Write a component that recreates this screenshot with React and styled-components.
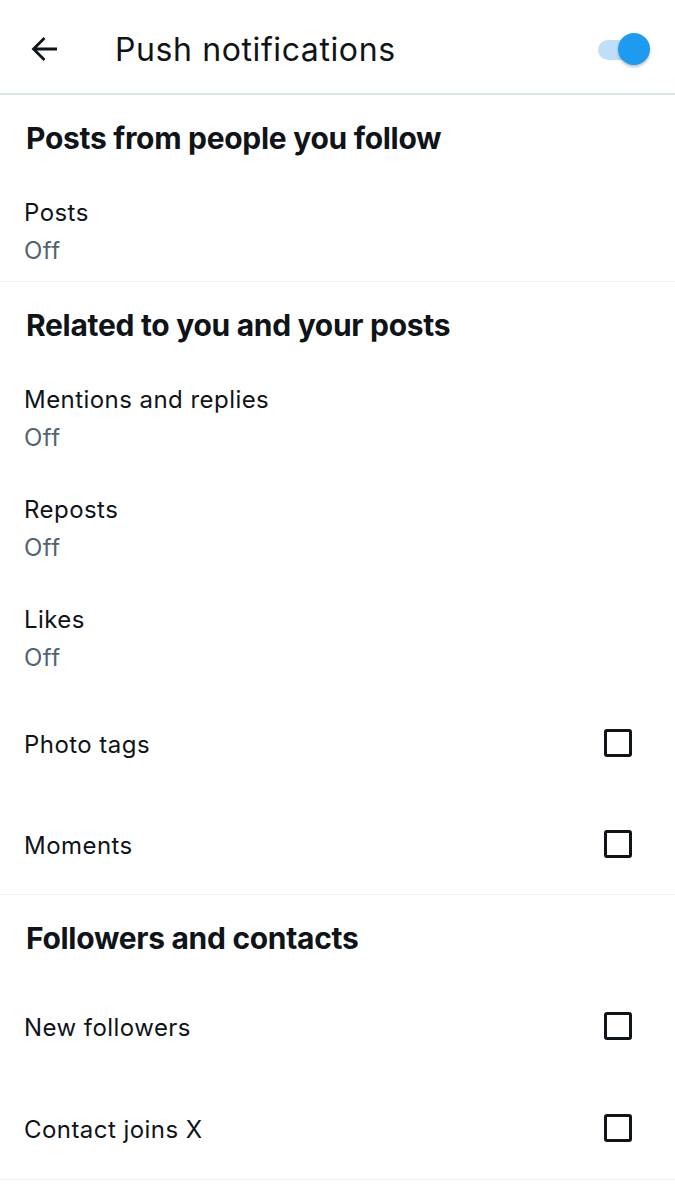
import React from "react";
import styled, { createGlobalStyle } from "styled-components";

const Global = createGlobalStyle`
  html, body { margin: 0; padding: 0; background: #ffffff; }
  body {
    font-family: Inter, "Noto Sans", "Liberation Sans", sans-serif;
    color: #0f1419;
    -webkit-font-smoothing: antialiased;
  }
`;

const Page = styled.div`
  width: 675px;
  min-height: 1200px;
  background: #fff;
`;

const Header = styled.header`
  height: 93px;
  display: flex;
  align-items: center;
  border-bottom: 2px solid #dbe4e8;
  padding: 0 24px 0 30px;
`;

const BackButton = styled.button`
  width: 30px;
  height: 30px;
  padding: 0;
  border: none;
  background: none;
  display: flex;
  align-items: center;
  justify-content: center;
  color: #0f1419;
  margin-top: 4px;
`;

const Title = styled.h1`
  flex: 1;
  margin: 6px 0 0 55px;
  font-size: 32px;
  font-weight: 400;
  letter-spacing: 0.6px;
  line-height: 38px;
`;

const Toggle = styled.div`
  position: relative;
  width: 52px;
  height: 33px;
  margin-right: 1px;
  margin-top: 6px;
`;

const Track = styled.div`
  position: absolute;
  left: 0;
  top: 7px;
  width: 44px;
  height: 20px;
  border-radius: 10px;
  background: #bfdff8;
`;

const Thumb = styled.div`
  position: absolute;
  right: 0;
  top: 0;
  width: 32px;
  height: 32px;
  border-radius: 50%;
  background: #1d9bf0;
  box-shadow: 0 2px 3px rgba(0, 0, 0, 0.25);
`;

const Section = styled.section`
  border-bottom: 1px solid #eff3f4;
`;

const Heading = styled.h2`
  margin: 0;
  padding: 27px 24px 21px 26px;
  font-size: 30px;
  font-weight: 700;
  line-height: 32px;
  letter-spacing: -0.3px;
`;

const Item = styled.div`
  padding: 20px 24px ${(p) => (p.$last ? "12px" : "16px")};
`;

const ItemTitle = styled.div`
  font-size: 24px;
  line-height: 36px;
  font-weight: 400;
  letter-spacing: 0.45px;
`;

const ItemSub = styled.div`
  margin-top: 2px;
  font-size: 24px;
  line-height: 36px;
  color: #536471;
  letter-spacing: 0.45px;
`;

const CheckRow = styled.div`
  height: ${(p) => p.$h || 102}px;
  display: flex;
  align-items: center;
  justify-content: space-between;
  padding: 0 43px 0 24px;
`;

const CheckLabel = styled.span`
  font-size: 24px;
  line-height: 36px;
  letter-spacing: 0.45px;
  margin-top: 4px;
`;

const Checkbox = styled.span`
  box-sizing: border-box;
  width: 28px;
  height: 28px;
  border: 3px solid #0f1419;
  border-radius: 3px;
  display: inline-block;
`;

const ArrowIcon = () => (
  <svg width="28" height="26" viewBox="0 0 28 26" fill="none">
    <path
      d="M26 13H2.5M13.5 2L2.5 13l11 11"
      stroke="currentColor"
      strokeWidth="2.8"
      strokeLinecap="butt"
      strokeLinejoin="miter"
    />
  </svg>
);

export default function App() {
  return (
    <Page>
      <Global />
      <Header>
        <BackButton aria-label="Back">
          <ArrowIcon />
        </BackButton>
        <Title>Push notifications</Title>
        <Toggle>
          <Track />
          <Thumb />
        </Toggle>
      </Header>

      <Section>
        <Heading>Posts from people you follow</Heading>
        <Item $last>
          <ItemTitle>Posts</ItemTitle>
          <ItemSub>Off</ItemSub>
        </Item>
      </Section>

      <Section>
        <Heading>Related to you and your posts</Heading>
        <Item>
          <ItemTitle>Mentions and replies</ItemTitle>
          <ItemSub>Off</ItemSub>
        </Item>
        <Item>
          <ItemTitle>Reposts</ItemTitle>
          <ItemSub>Off</ItemSub>
        </Item>
        <Item>
          <ItemTitle>Likes</ItemTitle>
          <ItemSub>Off</ItemSub>
        </Item>
        <CheckRow>
          <CheckLabel>Photo tags</CheckLabel>
          <Checkbox />
        </CheckRow>
        <CheckRow $h={100}>
          <CheckLabel>Moments</CheckLabel>
          <Checkbox />
        </CheckRow>
      </Section>

      <Section>
        <Heading>Followers and contacts</Heading>
        <CheckRow>
          <CheckLabel>New followers</CheckLabel>
          <Checkbox />
        </CheckRow>
        <CheckRow>
          <CheckLabel>Contact joins X</CheckLabel>
          <Checkbox />
        </CheckRow>
      </Section>
    </Page>
  );
}
